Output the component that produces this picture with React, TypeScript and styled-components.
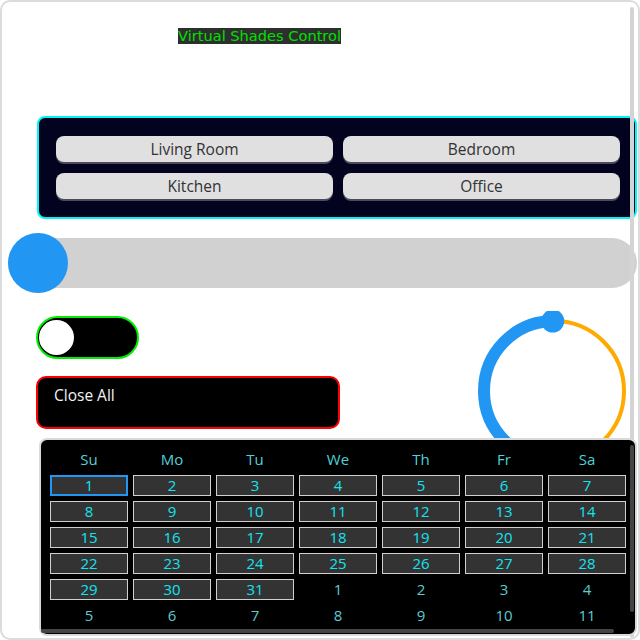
import React from "react";
import styled, { createGlobalStyle } from "styled-components";

const Global = createGlobalStyle`
  html, body { margin: 0; padding: 0; background: #fff; }
  body { font-family: "Open Sans", "DejaVu Sans", sans-serif; }
  * { box-sizing: border-box; }
`;

const Frame = styled.div`
  position: relative;
  width: 640px;
  height: 640px;
  border: 2px solid #dcdcdc;
  border-radius: 10px;
  overflow: hidden;
  background: #fff;
`;

const PageScrollThumb = styled.div`
  position: absolute;
  right: 4px;
  top: 5px;
  bottom: 0;
  width: 4px;
  border-radius: 2px;
  background: #d4d4d4;
  z-index: 1;
`;

const Header = styled.div`
  display: flex;
  padding: 26px 0 0 176px;
`;

const Title = styled.span`
  display: block;
  background: #2e2e2e;
  color: #00e000;
  font-family: "DejaVu Sans", sans-serif;
  font-size: 14.6px;
  line-height: 16px;
  height: 16px;
  white-space: nowrap;
`;

const RoomPanel = styled.div`
  margin: 72px 1px 0 35px;
  border: 2px solid #00f5f5;
  border-radius: 8px;
  background: #03031f;
  padding: 18px 15px 18px 17px;
  display: grid;
  grid-template-columns: 1fr 1fr;
  gap: 11px 10px;
`;

const RoomButton = styled.button`
  height: 26px;
  border: none;
  border-radius: 8px;
  background: #e0e0e0;
  color: #333;
  font-family: "Open Sans", sans-serif;
  font-size: 15.5px;
  padding: 0;
  box-shadow: 0 2px 0 #4b4b5c;
`;

const SliderWrap = styled.div`
  position: relative;
  margin: 14px 1px 0 6px;
  height: 60px;
  display: flex;
  align-items: center;
`;

const Track = styled.div`
  flex: 1;
  height: 50px;
  border-radius: 25px;
  background: #d1d1d1;
`;

const Thumb = styled.div`
  position: absolute;
  left: 0;
  top: 0;
  width: 60px;
  height: 60px;
  border-radius: 50%;
  background: #2196f3;
`;

const ControlsRow = styled.div`
  margin: 18px 4px -33px 34px;
  display: flex;
  justify-content: space-between;
  align-items: flex-start;
`;

const LeftCol = styled.div`
  padding-top: 5px;
  display: flex;
  flex-direction: column;
  align-items: flex-start;
  gap: 17px;
`;

const Toggle = styled.div`
  width: 103px;
  height: 43px;
  border: 2px solid #00ee00;
  border-radius: 22px;
  background: #000;
  display: flex;
  align-items: center;
  padding: 0 1px;
`;

const Knob = styled.div`
  width: 35px;
  height: 35px;
  border-radius: 50%;
  background: #fff;
`;

const CloseButton = styled.button`
  width: 304px;
  height: 53px;
  border: 2px solid #ff0000;
  border-radius: 10px;
  background: #000;
  color: #f2f2f2;
  font-family: "Open Sans", sans-serif;
  font-size: 15.5px;
  line-height: 20px;
  text-align: left;
  padding: 7px 16px;
  display: flex;
  align-items: flex-start;
`;

const Calendar = styled.div`
  position: relative;
  z-index: 2;
  margin: 0 1px 0 37px;
  border: 2px solid #d9d9d9;
  border-radius: 8px;
  background: #000;
  padding: 9px 9px 8px 9px;
  display: grid;
  grid-template-columns: repeat(7, 78px);
  grid-auto-rows: 21px;
  gap: 5px;
`;

const WeekDay = styled.div`
  color: #4fd0d8;
  font-size: 15px;
  line-height: 21px;
  text-align: center;
`;

const Day = styled.div<{ $out?: boolean; $selected?: boolean }>`
  font-size: 15px;
  text-align: center;
  color: ${(p) => (p.$out ? "#5ccbd2" : "#12e4f2")};
  background: ${(p) => (p.$out ? "transparent" : "#333")};
  border: ${(p) =>
    p.$out ? "none" : p.$selected ? "2px solid #2196f3" : "1px solid #d0d0d0"};
  line-height: ${(p) => (p.$out ? "21px" : p.$selected ? "17px" : "19px")};
`;

const CalVScroll = styled.div`
  position: absolute;
  right: 1px;
  top: 5px;
  width: 4px;
  height: 167px;
  border-radius: 2px;
  background: #444;
`;

const CalHScroll = styled.div`
  position: absolute;
  left: 0;
  bottom: 1px;
  width: 573px;
  height: 4px;
  border-radius: 2px;
  background: #444;
`;

const Dial = () => {
  const cx = 80;
  const cy = 80;
  const r = 70;
  const a = (-91 * Math.PI) / 180;
  const kx = cx + r * Math.cos(a);
  const ky = cy + r * Math.sin(a);
  return (
    <svg width="160" height="160" viewBox="0 0 160 160">
      <circle cx={cx} cy={cy} r={r} fill="none" stroke="#ffaa00" strokeWidth="4" />
      <path
        d={`M ${cx} ${cy + r} A ${r} ${r} 0 0 1 ${kx} ${ky}`}
        fill="none"
        stroke="#2196f3"
        strokeWidth="12"
      />
      <circle cx={kx} cy={ky} r="11.5" fill="#2196f3" />
    </svg>
  );
};

const weekDays = ["Su", "Mo", "Tu", "We", "Th", "Fr", "Sa"];
const days: { n: number; out: boolean }[] = [];
for (let i = 1; i <= 31; i++) days.push({ n: i, out: false });
for (let i = 1; i <= 11; i++) days.push({ n: i, out: true });

export default function App() {
  return (
    <>
      <Global />
      <Frame>
        <PageScrollThumb />
        <Header>
          <Title>Virtual Shades Control</Title>
        </Header>
        <RoomPanel>
          <RoomButton>Living Room</RoomButton>
          <RoomButton>Bedroom</RoomButton>
          <RoomButton>Kitchen</RoomButton>
          <RoomButton>Office</RoomButton>
        </RoomPanel>
        <SliderWrap>
          <Track />
          <Thumb />
        </SliderWrap>
        <ControlsRow>
          <LeftCol>
            <Toggle>
              <Knob />
            </Toggle>
            <CloseButton>Close All</CloseButton>
          </LeftCol>
          <Dial />
        </ControlsRow>
        <Calendar>
          {weekDays.map((d) => (
            <WeekDay key={d}>{d}</WeekDay>
          ))}
          {days.map((d, i) => (
            <Day key={i} $out={d.out} $selected={!d.out && d.n === 1}>
              {d.n}
            </Day>
          ))}
          <CalVScroll />
          <CalHScroll />
        </Calendar>
      </Frame>
    </>
  );
}
